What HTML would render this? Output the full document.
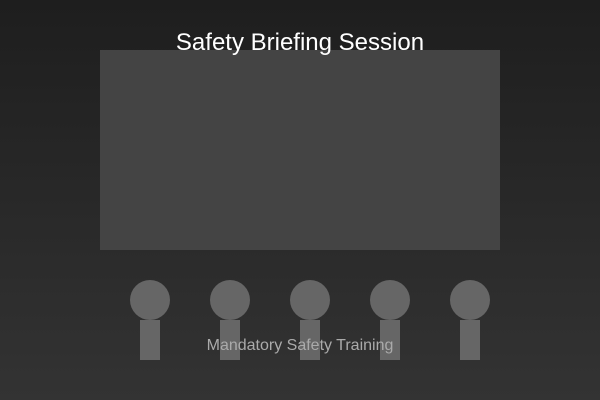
<!DOCTYPE html>
<html><head><meta charset="utf-8"><style>
html,body{margin:0;padding:0;width:600px;height:400px;overflow:hidden}
</style></head><body>
<svg width="600" height="400" xmlns="http://www.w3.org/2000/svg">
<defs><linearGradient id="g" x1="0" y1="0" x2="0" y2="1">
<stop offset="0" stop-color="#1e1e1e"/><stop offset="1" stop-color="#333333"/></linearGradient></defs>
<rect width="600" height="400" fill="url(#g)"/>
<rect x="100" y="50" width="400" height="200" fill="#444"/>
<text x="300" y="50" text-anchor="middle" font-family="Liberation Sans, sans-serif" font-size="24" fill="#fff">Safety Briefing Session</text>
<g fill="#666">
<circle cx="150" cy="300" r="20"/><rect x="140" y="320" width="20" height="40"/>
<circle cx="230" cy="300" r="20"/><rect x="220" y="320" width="20" height="40"/>
<circle cx="310" cy="300" r="20"/><rect x="300" y="320" width="20" height="40"/>
<circle cx="390" cy="300" r="20"/><rect x="380" y="320" width="20" height="40"/>
<circle cx="470" cy="300" r="20"/><rect x="460" y="320" width="20" height="40"/>
</g>
<text x="300" y="350" text-anchor="middle" font-family="Liberation Sans, sans-serif" font-size="16" fill="#aaa">Mandatory Safety Training</text>
</svg>
</body></html>
